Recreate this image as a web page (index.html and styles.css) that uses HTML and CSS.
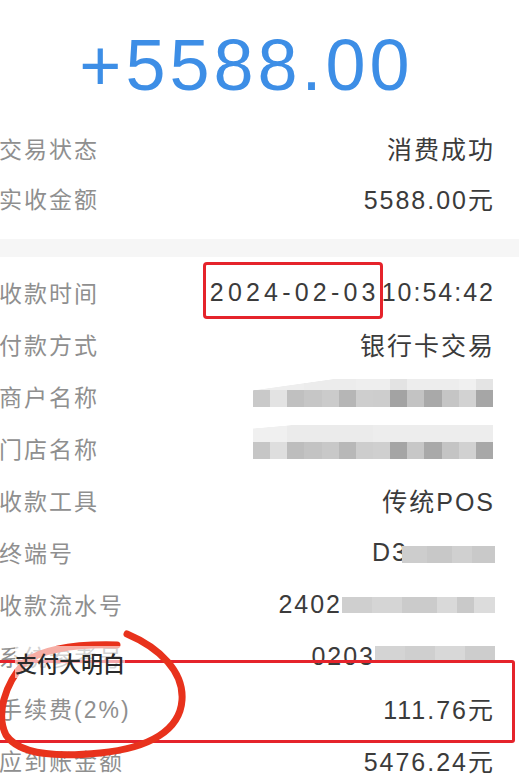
FILE: index.html
```html
<!DOCTYPE html>
<html lang="zh-CN">
<head>
    <meta charset="UTF-8">
    <meta name="viewport" content="width=device-width, initial-scale=1.0">
    <title>收款详情</title>
    <link rel="stylesheet" href="styles.css">
</head>
<body>
    <div class="receipt">
        <div class="amount">+5588.00</div>

        <div class="group top">
            <div class="row"><span class="label">交易状态</span><span class="value">消费成功</span></div>
            <div class="row"><span class="label">实收金额</span><span class="value">5588.00元</span></div>
        </div>

        <div class="divider"></div>

        <div class="group">
            <div class="row"><span class="label">收款时间</span><span class="value"><span class="mark">2024-02-03</span> 10:54:42</span></div>
            <div class="row"><span class="label">付款方式</span><span class="value">银行卡交易</span></div>
            <div class="row"><span class="label">商户名称</span><span class="mosaic mosaic-merchant"></span></div>
            <div class="row"><span class="label">门店名称</span><span class="mosaic mosaic-store"></span></div>
            <div class="row"><span class="label">收款工具</span><span class="value">传统POS</span></div>
            <div class="row"><span class="label">终端号</span><span class="value">D3<span class="mosaic mosaic-terminal"></span></span></div>
            <div class="row"><span class="label">收款流水号</span><span class="value">2402<span class="mosaic mosaic-serial"></span></span></div>
            <div class="row"><span class="label">系统参考号</span><span class="value">0203<span class="mosaic mosaic-ref"></span></span></div>
            <div class="row fee"><span class="label">手续费(2%)</span><span class="value">111.76元</span></div>
            <div class="row"><span class="label">应到账金额</span><span class="value">5476.24元</span></div>
        </div>

        <!-- 标注 -->
        <svg class="ring" viewBox="0 0 519 784" width="519" height="784">
            <path d="M127,634 C160,648 184,672 182,700 C180,730 150,748 100,753 C60,757 20,756 6,735 C-4,715 4,685 25,662 C45,648 80,644 117,645" />
        </svg>
        <div class="watermark">支付大明白</div>
    </div>
</body>
</html>
```

FILE: styles.css
```css
* {
    margin: 0;
    padding: 0;
    box-sizing: border-box;
}

body {
    background: #fff;
    overflow: hidden;
    font-family: "Liberation Sans", "Noto Sans CJK SC", sans-serif;
}

.receipt {
    position: relative;
    width: 519px;
    height: 784px;
    overflow: hidden;
    padding-right: 26px;
}

.amount {
    text-align: center;
    font-size: 72px;
    line-height: 110px;
    padding-top: 10px;
    margin-bottom: 3px;
    letter-spacing: 4px;
    color: #3d8ee6;
}

.row {
    display: flex;
    justify-content: space-between;
    align-items: center;
    height: 52px;
}

.top .row {
    height: 50px;
}

.label {
    margin-left: -1px;
    font-size: 23px;
    letter-spacing: 2px;
    color: #8f8f8f;
    white-space: nowrap;
}

.value {
    margin-right: -2px;
    font-size: 25px;
    letter-spacing: 2px;
    color: #3b3b3b;
    white-space: nowrap;
    display: flex;
    align-items: center;
}

.divider {
    height: 18px;
    margin: 16px -26px 9px 0;
    background: #f6f6f6;
}

.mark {
    position: relative;
    margin-right: 2px;
    letter-spacing: 4.2px;
}

.mark::after {
    content: "";
    position: absolute;
    left: -7px;
    right: -3px;
    top: -16px;
    bottom: -12px;
    border: 3px solid #e5232b;
    border-radius: 4px;
}

/* 打码 */
.mosaic {
    display: inline-block;
    height: 28px;
    flex-shrink: 0;
}

.mosaic-merchant,
.mosaic-store {
    width: 240px;
    margin-top: -6px;
    background:
        linear-gradient(90deg, #c9c9c9 0 17px, #e3e3e3 17px 34px, #c0c0c0 34px 51px, #c6c6c6 51px 69px, #cbcbcb 69px 86px, #b6b6b6 86px 103px, #cecece 103px 120px, #cdcdcd 120px 137px, #a3a3a3 137px 154px, #c3c3c3 154px 171px, #a9a9a9 171px 189px, #c5c5c5 189px 206px, #d2d2d2 206px 223px, #a6a6a6 223px 240px) bottom / 100% 17px no-repeat,
        linear-gradient(90deg, #eeeeee 0 51px, #ececec 51px 103px, #eeeeee 103px 137px, #e3e3e3 137px 154px, #ededed 154px 206px, #f0f0f0 206px 223px, #e4e4e4 223px 240px) top / 100% 11px no-repeat;
}

.mosaic-merchant {
    -webkit-mask: linear-gradient(172deg, transparent 0 18%, #000 19%);
    mask: linear-gradient(172deg, transparent 0 18%, #000 19%);
}

.mosaic-store {
    height: 34px;
    margin-top: -12px;
    background:
        linear-gradient(90deg, #c6c6c6 0 17px, #dedede 17px 34px, #bdbdbd 34px 51px, #c3c3c3 51px 69px, #c8c8c8 69px 86px, #b8b8b8 86px 103px, #cdcdcd 103px 120px, #cfcfcf 120px 137px, #a5a5a5 137px 154px, #c7c7c7 154px 171px, #a9a9a9 171px 189px, #c4c4c4 189px 206px, #d1d1d1 206px 223px, #a8a8a8 223px 240px) bottom / 100% 17px no-repeat,
        linear-gradient(90deg, #f0f0f0 0 34px, #ebebeb 34px 120px, #ededed 120px 240px) top / 100% 17px no-repeat;
    -webkit-mask: linear-gradient(175deg, transparent 0 6%, #000 7%, #000 100%);
    mask: linear-gradient(175deg, transparent 0 6%, #000 7%, #000 100%);
}

.mosaic-terminal {
    width: 93px;
    height: 17px;
    margin-left: -6px;
    margin-top: 4px;
    background: linear-gradient(90deg, #cdcdcd 0 25px, #c8c8c8 25px 50px, #d0d0d0 50px 70px, #c9c9c9 70px 93px);
}

.mosaic-serial {
    width: 153px;
    height: 16px;
    margin-top: 2px;
    background: linear-gradient(90deg, #cfcfcf 0 30px, #d5d5d5 30px 60px, #cbcbcb 60px 95px, #d9d9d9 95px 115px, #c9c9c9 115px 132px, #dcdcdc 132px 153px);
}

.mosaic-ref {
    width: 120px;
    height: 17px;
    margin-top: -4px;
    background: linear-gradient(90deg, #d4d4d4 0 30px, #cfcfcf 30px 60px, #d8d8d8 60px 90px, #cdcdcd 90px 120px);
}

.fee {
    position: relative;
}

.fee::after {
    content: "";
    position: absolute;
    left: -10px;
    right: -22px;
    top: -22px;
    bottom: -9px;
    border: 3px solid #e5232b;
    border-radius: 3px;
}

.ring {
    position: absolute;
    left: 0;
    top: 0;
    pointer-events: none;
}

.ring path {
    fill: none;
    stroke: #e8321c;
    stroke-width: 7;
    stroke-linecap: round;
}

.watermark {
    position: absolute;
    left: 15px;
    top: 646px;
    font-family: "Noto Sans CJK SC", sans-serif;
    font-size: 22px;
    font-weight: 500;
    color: #2a2a2a;
    background: rgba(255, 255, 255, 0.6);
}
```
